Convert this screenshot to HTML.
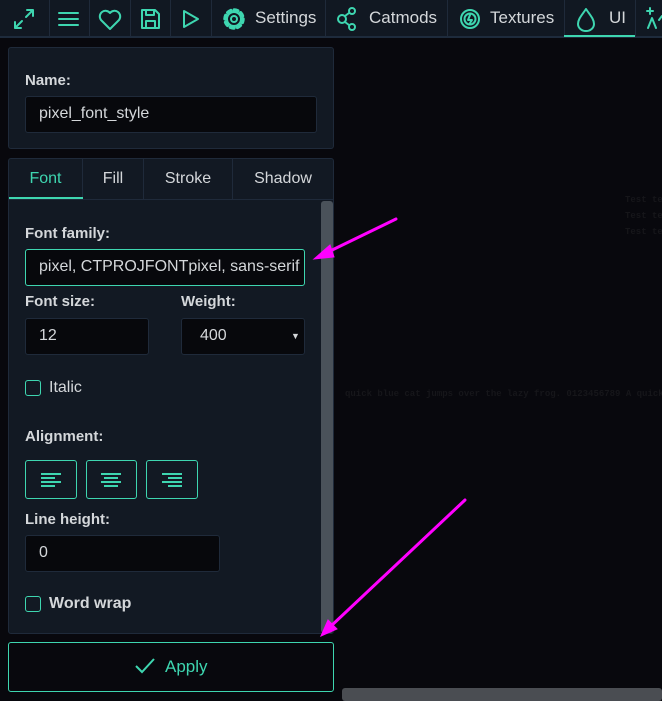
<!DOCTYPE html>
<html><head><style>
*{box-sizing:border-box;margin:0;padding:0}
body{width:662px;height:701px;background:#08080d;font-family:"Liberation Sans",sans-serif;color:#d4d7da;position:relative;overflow:hidden;font-size:16px}
.a{position:absolute}
.tb{left:0;top:0;width:662px;height:38px;background:#111822;border-bottom:2px solid #1e2b3c}
.sep{top:0;width:1px;height:37px;background:#1f2a3a}
.tt{top:8px;font-size:17px;color:#d4d7da}
.panel{background:#121923;border:1px solid #1f2a3a;border-radius:3px}
.lbl{font-weight:bold;font-size:15px;color:#d4d7da}
.inp{background:#07080c;border:1px solid #1f2a3a;border-radius:3px;font-size:16px;padding-left:13px;line-height:34px;color:#d4d7da}
.cb{width:16px;height:16px;border:1.5px solid #3ed6b0;border-radius:3px}
.ab{border:1.5px solid #3ed6b0;border-radius:3px;height:39px}
.tab{top:159px;height:40px;line-height:40px;text-align:center;font-size:16px;border-right:1px solid #1f2a3a}
.bt{font-size:9px;color:#16161a;font-family:'Liberation Mono',monospace;font-weight:bold;white-space:nowrap}
</style></head><body>
<div class="a tb"></div>
<svg class="a" style="left:0;top:0" width="662" height="38" fill="none" stroke="#3ed6b0" stroke-width="2" stroke-linecap="round" stroke-linejoin="round">
<path d="M15 28 L22 21 M15 22 V28 H21 M33 10 L26 17 M27 10 H33 V16"/>
<path d="M59 13 H78 M59 19 H78 M59 25 H78"/>
<path d="M110 29 L101 20 A5 5 0 0 1 110 13 A5 5 0 0 1 119 20 Z"/>
<path d="M142 10 H155 L159 14 V28 H142 Z M146 10 V15 H154 V10 M146 28 V21 H155 V28"/>
<path d="M184 11 L198 19 L184 27 Z"/>
<circle cx="234" cy="19" r="9" stroke-width="3.5" stroke-dasharray="3.5 3.57"/>
<circle cx="234" cy="19" r="7" fill="#111822"/>
<circle cx="234" cy="19" r="3"/>
<circle cx="342" cy="19" r="4"/><circle cx="352" cy="11" r="3"/><circle cx="352" cy="27" r="3"/><path d="M345 16 L349 13 M345 22 L349 25"/>
<circle cx="470" cy="19" r="9"/><circle cx="470" cy="19" r="5.5"/><path d="M470 15 L468 20 H472 L470 23"/>
<path d="M586 9 C582 15 578 19 578 24 A8 7 0 0 0 594 24 C594 19 590 15 586 9 Z"/>
<path d="M650 8 V14 M647 11 H653 M648 28 L652 18 L656 28 M659 20 L662 16"/>
</svg>
<div class="a sep" style="left:49px"></div><div class="a sep" style="left:89px"></div><div class="a sep" style="left:130px"></div><div class="a sep" style="left:170px"></div><div class="a sep" style="left:211px"></div><div class="a sep" style="left:325px"></div><div class="a sep" style="left:447px"></div><div class="a sep" style="left:564px"></div><div class="a sep" style="left:635px"></div>
<div class="a tt" style="left:255px">Settings</div>
<div class="a tt" style="left:369px">Catmods</div>
<div class="a tt" style="left:490px">Textures</div>
<div class="a tt" style="left:609px">UI</div>
<div class="a" style="left:564px;top:35px;width:71px;height:2px;background:#3ed6b0"></div>

<div class="a panel" style="left:8px;top:47px;width:326px;height:102px"></div>
<div class="a lbl" style="left:25px;top:72px">Name:</div>
<div class="a inp" style="left:25px;top:96px;width:292px;height:37px">pixel_font_style</div>

<div class="a panel" style="left:8px;top:158px;width:326px;height:476px"></div>
<div class="a" style="left:9px;top:199px;width:324px;height:1px;background:#1f2a3a"></div>
<div class="a tab" style="left:9px;width:74px;color:#3ed6b0">Font</div>
<div class="a" style="left:9px;top:197px;width:74px;height:2px;background:#3ed6b0"></div>
<div class="a tab" style="left:83px;width:61px">Fill</div>
<div class="a tab" style="left:144px;width:89px">Stroke</div>
<div class="a tab" style="left:233px;width:100px;border:none">Shadow</div>
<div class="a" style="left:321px;top:201px;width:12px;height:432px;background:#4a525a;border-radius:3px"></div>

<div class="a lbl" style="left:25px;top:225px">Font family:</div>
<div class="a inp" style="left:25px;top:249px;width:280px;height:37px;border-color:#3ed6b0;overflow:hidden;white-space:nowrap">pixel, CTPROJFONTpixel, sans-serif</div>
<div class="a lbl" style="left:25px;top:293px">Font size:</div>
<div class="a lbl" style="left:181px;top:293px">Weight:</div>
<div class="a inp" style="left:25px;top:318px;width:124px;height:37px">12</div>
<div class="a inp" style="left:181px;top:318px;width:124px;height:37px;padding-left:18px">400</div>
<div class="a" style="left:291px;top:331px;font-size:9px">▼</div>
<div class="a cb" style="left:25px;top:380px"></div>
<div class="a" style="left:49px;top:379px">Italic</div>
<div class="a lbl" style="left:25px;top:428px">Alignment:</div>
<div class="a ab" style="left:25px;top:460px;width:52px"></div>
<div class="a ab" style="left:86px;top:460px;width:51px"></div>
<div class="a ab" style="left:146px;top:460px;width:52px"></div>
<svg class="a" style="left:0;top:460px" width="220" height="40" stroke="#3ed6b0" stroke-width="2">
<path d="M41 14 H61 M41 18 H55 M41 22 H61 M41 26 H55"/>
<path d="M101 14 H121 M104 18 H118 M101 22 H121 M104 26 H118"/>
<path d="M162 14 H182 M168 18 H182 M162 22 H182 M168 26 H182"/>
</svg>
<div class="a lbl" style="left:25px;top:511px">Line height:</div>
<div class="a inp" style="left:25px;top:535px;width:195px;height:37px">0</div>
<div class="a cb" style="left:25px;top:596px"></div>
<div class="a lbl" style="left:49px;top:595px;font-size:16px">Word wrap</div>

<div class="a" style="left:8px;top:642px;width:326px;height:50px;border:1.5px solid #3ed6b0;border-radius:3px"></div>
<svg class="a" style="left:134px;top:657px" width="22" height="18" fill="none" stroke="#3ed6b0" stroke-width="2"><path d="M2 9 L8 15 L20 2"/></svg>
<div class="a" style="left:165px;top:657px;color:#3ed6b0;font-size:17px">Apply</div>
<div class="a" style="left:342px;top:688px;width:320px;height:13px;background:#4a4d52;border-radius:3px"></div>

<div class="a bt" style="left:625px;top:192px;line-height:16px">Test te<br>Test te<br>Test te</div>
<div class="a bt" style="left:345px;top:389px">quick blue cat jumps over the lazy frog. 0123456789 A quick blu</div>

<svg class="a" style="left:0;top:0" width="662" height="701" fill="#ff00ff" stroke="#ff00ff" stroke-width="3" stroke-linecap="round">
<path d="M396 219 L326 253"/><path d="M314 259 L330 245 L334 257 Z" stroke-width="1"/>
<path d="M465 500 L330 627"/><path d="M321 636 L328 620 L337 629 Z" stroke-width="1"/>
</svg>
</body></html>
